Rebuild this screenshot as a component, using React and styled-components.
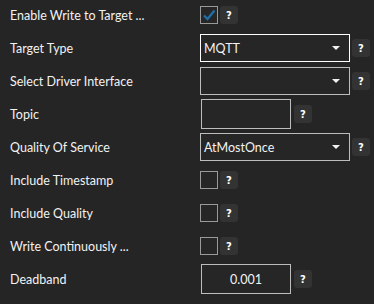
import React from "react";
import styled, { createGlobalStyle } from "styled-components";

const GlobalStyle = createGlobalStyle`
  html, body {
    margin: 0;
    background: #252525;
  }
  body {
    font-family: Lato, "Noto Sans", sans-serif;
  }
`;

const Panel = styled.div`
  width: 374px;
  height: 304px;
  box-sizing: border-box;
  padding-left: 10px;
  display: flex;
  flex-direction: column;
  gap: 3px;
  background: #252525;
  color: #f2f2f2;
`;

const Row = styled.div`
  height: 30px;
  display: grid;
  grid-template-columns: 190px 1fr;
  align-items: center;
`;

const Label = styled.div`
  font-size: 12.5px;
  white-space: nowrap;
`;

const Controls = styled.div`
  display: flex;
  align-items: center;
  gap: ${(p) => (p.$wide ? 3 : 2)}px;
  padding-left: ${(p) => (p.$inset ? 1 : 0)}px;
`;

const Box = styled.div`
  width: 18px;
  height: 18px;
  box-sizing: border-box;
  border: 1px solid #9a9a9a;
  background: #262626;
  display: flex;
  align-items: center;
  justify-content: center;
`;

const Help = styled.div`
  width: 18px;
  height: 18px;
  border-radius: 3px;
  background: #333333;
  color: #ffffff;
  font-family: "DejaVu Sans", sans-serif;
  font-weight: bold;
  font-size: 10px;
  display: flex;
  align-items: center;
  justify-content: center;
`;

const Combo = styled.div`
  width: 150px;
  height: 28px;
  box-sizing: border-box;
  border: 1px solid ${(p) => (p.$focused ? "#ffffff" : "#bdbdbd")};
  background: #262626;
  display: flex;
  align-items: center;
  justify-content: space-between;
  padding: 0 9px 0 3px;
  font-size: 12.5px;
`;

const Arrow = styled.div`
  width: 0;
  height: 0;
  border-left: 4px solid transparent;
  border-right: 4px solid transparent;
  border-top: 4px solid #f2f2f2;
`;

const TextBox = styled.div`
  width: 90px;
  height: 30px;
  box-sizing: border-box;
  border: 1px solid #bdbdbd;
  background: #262626;
  display: flex;
  align-items: center;
  justify-content: center;
  font-size: 12.5px;
`;

const Check = () => (
  <svg width="14" height="14" viewBox="0 0 14 14">
    <path d="M2 7.5 L5.5 11 L12.5 2.5" fill="none" stroke="#1f6fa6" strokeWidth="2.4" />
  </svg>
);

const CheckRow = ({ label, checked }) => (
  <Row>
    <Label>{label}</Label>
    <Controls>
      <Box>{checked && <Check />}</Box>
      <Help>?</Help>
    </Controls>
  </Row>
);

const ComboRow = ({ label, value, focused }) => (
  <Row>
    <Label>{label}</Label>
    <Controls>
      <Combo $focused={focused}>
        <span>{value}</span>
        <Arrow />
      </Combo>
      <Help>?</Help>
    </Controls>
  </Row>
);

const TextRow = ({ label, value }) => (
  <Row>
    <Label>{label}</Label>
    <Controls $inset $wide>
      <TextBox>{value}</TextBox>
      <Help>?</Help>
    </Controls>
  </Row>
);

export default function App() {
  return (
    <>
      <GlobalStyle />
      <Panel>
        <CheckRow label="Enable Write to Target ..." checked />
        <ComboRow label="Target Type" value="MQTT" focused />
        <ComboRow label="Select Driver Interface" value="" />
        <TextRow label="Topic" value="" />
        <ComboRow label="Quality Of Service" value="AtMostOnce" />
        <CheckRow label="Include Timestamp" />
        <CheckRow label="Include Quality" />
        <CheckRow label="Write Continuously ..." />
        <TextRow label="Deadband" value="0.001" />
      </Panel>
    </>
  );
}
